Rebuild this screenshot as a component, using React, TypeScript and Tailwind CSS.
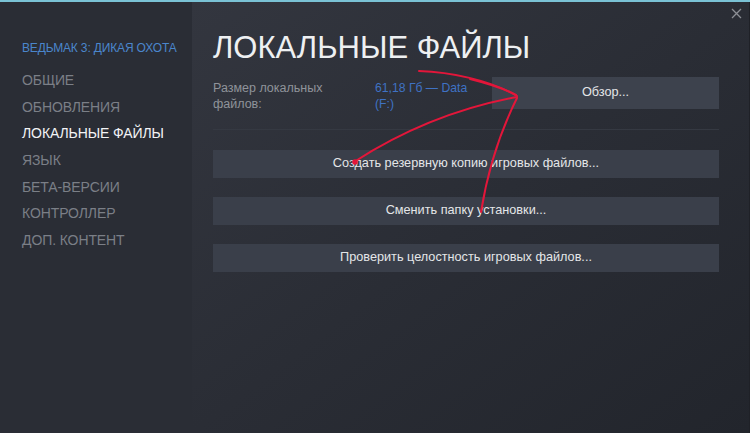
import React from "react";

const menu = [
  { label: "ОБЩИЕ", active: false },
  { label: "ОБНОВЛЕНИЯ", active: false },
  { label: "ЛОКАЛЬНЫЕ ФАЙЛЫ", active: true },
  { label: "ЯЗЫК", active: false },
  { label: "БЕТА-ВЕРСИИ", active: false },
  { label: "КОНТРОЛЛЕР", active: false },
  { label: "ДОП. КОНТЕНТ", active: false },
];

const actions = [
  "Создать резервную копию игровых файлов...",
  "Сменить папку установки...",
  "Проверить целостность игровых файлов...",
];

export default function App() {
  return (
    <div
      className="relative w-[750px] h-[433px] overflow-hidden flex flex-col bg-[#262930]"
      style={{ fontFamily: '"Liberation Sans", Arial, sans-serif' }}
    >
      <div className="h-[2px] bg-[#7ac2d5] shrink-0" />
      <div className="flex flex-1">
        <aside className="w-[192px] shrink-0 bg-[#2a2d35] pl-[22px] pt-[38px]">
          <div className="text-[12px] leading-[16px] text-[#4a86cc] tracking-[-0.15px]">
            ВЕДЬМАК 3: ДИКАЯ ОХОТА
          </div>
          <nav className="mt-[11px] flex flex-col">
            {menu.map((m) => (
              <div
                key={m.label}
                className={
                  m.active
                    ? "h-[26.7px] flex items-center text-[14px] text-[#f2f3f5] tracking-[-0.1px]"
                    : "h-[26.7px] flex items-center text-[14px] text-[#7b7f87] tracking-[-0.1px]"
                }
              >
                {m.label}
              </div>
            ))}
          </nav>
        </aside>
        <main className="flex-1 flex flex-col bg-gradient-to-br from-[#33363f] via-[#2a2d35] to-[#22252c] border-r border-[#1f2127]">
          <div className="flex justify-end pr-[7px] pt-[6px] h-[28px]">
            <svg width="11" height="11" viewBox="0 0 11 11" className="text-[#8c8f95]">
              <path d="M1 1 L10 10 M10 1 L1 10" stroke="currentColor" strokeWidth="1.3" />
            </svg>
          </div>
          <div className="pl-[21px] pr-[30px]">
            <h1 className="text-[31px] leading-[36px] font-normal text-[#eef0f2]">
              ЛОКАЛЬНЫЕ ФАЙЛЫ
            </h1>
            <div className="mt-[11px] flex items-start">
              <div className="w-[162px] pt-[3px] text-[12.5px] leading-[16px] text-[#8f939a]">
                Размер локальных
                <br />
                файлов:
              </div>
              <div className="w-[117px] pt-[3px] pr-[24px] text-[12.2px] leading-[16px] text-[#3f72c4]">
                61,18 Гб — Data (F:)
              </div>
              <button className="flex-1 h-[32px] bg-[#3d424d] text-[12.7px] text-[#e4e6e8]">
                Обзор...
              </button>
            </div>
            <div className="mt-[17px] h-px bg-[#353942]" />
            <div className="mt-[20px] flex flex-col gap-[19px]">
              {actions.map((a) => (
                <button
                  key={a}
                  className="h-[28px] w-full bg-[#3a3f4a] text-[12.7px] text-[#e4e6e8]"
                >
                  {a}
                </button>
              ))}
            </div>
          </div>
        </main>
      </div>
      <svg
        className="absolute inset-0 pointer-events-none"
        width="750"
        height="433"
        viewBox="0 0 750 433"
        fill="none"
      >
        <g stroke="#e3163a" strokeWidth="2" strokeLinecap="round" strokeLinejoin="round">
          <path d="M419 71 C 450 72, 490 80, 517 96" />
          <path d="M470 79 C 490 84, 505 89, 516 95" />
          <path d="M517 97 Q 430 113 354 162" />
          <path d="M517 98 Q 491 150 481 212" />
        </g>
        <circle cx="355" cy="162" r="2.8" fill="#e3163a" />
      </svg>
    </div>
  );
}
